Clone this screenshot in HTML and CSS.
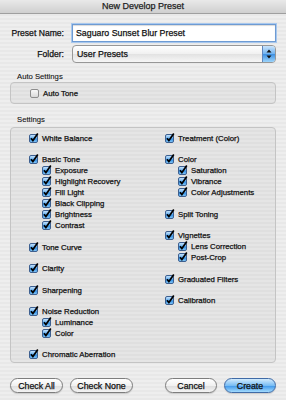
FILE: index.html
```html
<!DOCTYPE html>
<html lang="en">
<head>
    <meta charset="UTF-8">
    <title>New Develop Preset</title>
    <link rel="stylesheet" href="styles.css">
</head>
<body>

    <!-- shared gradients for the aqua checkboxes -->
    <svg class="defs" width="0" height="0" aria-hidden="true">
        <defs>
            <linearGradient id="aqua" x1="0" y1="0" x2="0" y2="1">
                <stop offset="0" stop-color="#d2e9fd"/>
                <stop offset="0.45" stop-color="#6db4f2"/>
                <stop offset="0.55" stop-color="#2f8de4"/>
                <stop offset="1" stop-color="#8fd0fb"/>
            </linearGradient>
            <linearGradient id="blank" x1="0" y1="0" x2="0" y2="1">
                <stop offset="0" stop-color="#fafafa"/>
                <stop offset="1" stop-color="#d6d6d6"/>
            </linearGradient>
        </defs>
    </svg>

    <div class="window">
        <header class="titlebar">New Develop Preset</header>

        <div class="form">
            <div class="field">
                <label class="field-label">Preset Name:</label>
                <div class="text-input">Saguaro Sunset Blur Preset</div>
            </div>
            <div class="field">
                <label class="field-label">Folder:</label>
                <div class="select">
                    <span class="select-value">User Presets</span>
                    <span class="stepper">
                        <svg viewBox="0 0 12 15"><path d="M3.5 6 L6 3 L8.5 6 Z M3.5 9 L6 12 L8.5 9 Z" fill="#111"/></svg>
                    </span>
                </div>
            </div>
        </div>

        <section class="group">
            <div class="group-title">Auto Settings</div>
            <div class="group-box auto-box">
                <div class="check"><span class="box off"></span>Auto Tone</div>
            </div>
        </section>

        <section class="group">
            <div class="group-title">Settings</div>
            <div class="group-box settings">
                <div class="column">
                    <div class="check">White Balance</div>
                    <div class="set">
                        <div class="check">Basic Tone</div>
                        <div class="check sub">Exposure</div>
                        <div class="check sub">Highlight Recovery</div>
                        <div class="check sub">Fill Light</div>
                        <div class="check sub">Black Clipping</div>
                        <div class="check sub">Brightness</div>
                        <div class="check sub">Contrast</div>
                    </div>
                    <div class="check">Tone Curve</div>
                    <div class="check">Clarity</div>
                    <div class="check">Sharpening</div>
                    <div class="set">
                        <div class="check">Noise Reduction</div>
                        <div class="check sub">Luminance</div>
                        <div class="check sub">Color</div>
                    </div>
                    <div class="check">Chromatic Aberration</div>
                </div>
                <div class="column">
                    <div class="check">Treatment (Color)</div>
                    <div class="set">
                        <div class="check">Color</div>
                        <div class="check sub">Saturation</div>
                        <div class="check sub">Vibrance</div>
                        <div class="check sub">Color Adjustments</div>
                    </div>
                    <div class="check">Split Toning</div>
                    <div class="set">
                        <div class="check">Vignettes</div>
                        <div class="check sub">Lens Correction</div>
                        <div class="check sub">Post-Crop</div>
                    </div>
                    <div class="check">Graduated Filters</div>
                    <div class="check">Calibration</div>
                </div>
            </div>
        </section>

        <div class="buttons">
            <button class="btn check-all">Check All</button>
            <button class="btn check-none">Check None</button>
            <span class="spacer"></span>
            <button class="btn cancel">Cancel</button>
            <button class="btn default">Create</button>
        </div>
    </div>

    <script>
        // every box in the Settings group is ticked
        const tick = '<svg class="tick" viewBox="0 0 10 10">' +
            '<rect x="0.5" y="1.5" width="8" height="8" rx="1.5" fill="url(#aqua)" stroke="#3d5f8f"/>' +
            '<path d="M2 5.2 L3.9 7.6 L8.8 0.6" fill="none" stroke="#000" stroke-width="1.7"/></svg>';
        document.querySelectorAll('.settings .check').forEach(el => {
            el.insertAdjacentHTML('afterbegin', tick);
        });
        document.querySelectorAll('.box.off').forEach(el => {
            el.outerHTML = '<svg class="tick" viewBox="0 0 10 10">' +
                '<rect x="0.5" y="1.5" width="8" height="8" rx="1.5" fill="url(#blank)" stroke="#8c8c8c"/></svg>';
        });
    </script>

</body>
</html>
```

FILE: styles.css
```css
/* Base */
html, body {
    margin: 0;
    padding: 0;
}

body {
    font-family: 'Liberation Sans', Arial, sans-serif;
    color: #111;
    background: #ececec;
    -webkit-text-stroke: 0.25px currentColor;
}

.defs {
    position: absolute;
}

.window {
    width: 286px;
    height: 400px;
    display: flex;
    flex-direction: column;
    box-sizing: border-box;
    background: repeating-linear-gradient(to bottom, #eeeeee 0, #eeeeee 2px, #e8e8e8 2px, #e8e8e8 4px);
}

/* Title bar */
.titlebar {
    height: 13px;
    line-height: 13px;
    text-align: center;
    font-size: 9px;
    color: #222;
    background: linear-gradient(to bottom, #e9e9e9, #cfcfcf);
    border-bottom: 1px solid #9f9f9f;
}

/* Name / folder rows */
.form {
    display: flex;
    flex-direction: column;
    gap: 3px;
    padding: 10px 10px 0 0;
}

.field {
    display: flex;
    align-items: center;
    gap: 8px;
    height: 18px;
}

.field-label {
    width: 64px;
    text-align: right;
    font-size: 8.6px;
}

.text-input {
    flex: 1;
    height: 16px;
    line-height: 16px;
    padding-left: 3px;
    font-size: 8.8px;
    background: #fff;
    border: 1px solid #6e9bd3;
    box-shadow: 0 0 0 1px #a8c8ee, inset 0 1px 1px rgba(0, 0, 0, 0.15);
}

.select {
    flex: 1;
    height: 16px;
    display: flex;
    align-items: center;
    border: 1px solid #979797;
    border-radius: 4px;
    background: linear-gradient(to bottom, #ffffff, #f0f0f0 50%, #e2e2e2 51%, #f6f6f6);
    overflow: hidden;
}

.select-value {
    flex: 1;
    padding-left: 4px;
    font-size: 8.8px;
}

.stepper {
    width: 12px;
    height: 16px;
    border-left: 1px solid #5f86bd;
    background: linear-gradient(to bottom, #cbe4fb, #6fb2f0 50%, #3c8fe2 51%, #9cd4fb);
}

.stepper svg {
    display: block;
    width: 12px;
    height: 16px;
}

/* Grouped boxes */
.group {
    margin: 0 10px;
}

.group:first-of-type {
    margin-top: 10px;
}

.group + .group {
    margin-top: 12px;
}

.group-title {
    font-size: 7.7px;
    line-height: 8px;
    padding-left: 7px;
    margin-bottom: 1px;
    -webkit-text-stroke: 0.1px currentColor;
}

.group + .group .group-title {
    margin-bottom: 3px;
}

.group-box {
    border: 1px solid #c4c4c4;
    border-radius: 4px;
    background: rgba(0, 0, 0, 0.035);
}

.auto-box {
    height: 20px;
    display: flex;
    align-items: center;
    padding-left: 19px;
}

.settings {
    height: 236px;
    box-sizing: border-box;
    display: grid;
    grid-template-columns: 136px 1fr;
    padding: 5px 0 0 18px;
}

.column, .set {
    display: flex;
    flex-direction: column;
}

.column {
    gap: 10.4px;
}

/* Checkbox rows */
.check {
    display: flex;
    align-items: center;
    gap: 3px;
    height: 11px;
    font-size: 7.8px;
    white-space: nowrap;
}

.check.sub {
    margin-left: 13px;
}

.tick {
    width: 10px;
    height: 10px;
    flex: none;
    margin-top: -1px;
}

/* Bottom buttons */
.buttons {
    display: flex;
    align-items: center;
    gap: 7px;
    margin: 15px 10px 0;
}

.spacer {
    flex: 1;
}

.btn {
    height: 15px;
    padding: 0;
    font-family: inherit;
    font-size: 8.8px;
    color: #111;
    -webkit-text-stroke: 0.25px currentColor;
    border: 1px solid #7d7d7d;
    border-radius: 8px;
    background: linear-gradient(to bottom, #ffffff, #f1f1f1 50%, #dcdcdc 51%, #f4f4f4);
    box-shadow: 0 1px 1px rgba(0, 0, 0, 0.15);
}

.check-all { width: 53px; }
.check-none { width: 63px; }
.cancel { width: 52px; }

.btn.default {
    width: 52px;
    border-color: #3f6aa6;
    background: linear-gradient(to bottom, #d3ebfd, #79bdf4 50%, #3c95ea 51%, #a3dbfd);
}
```
